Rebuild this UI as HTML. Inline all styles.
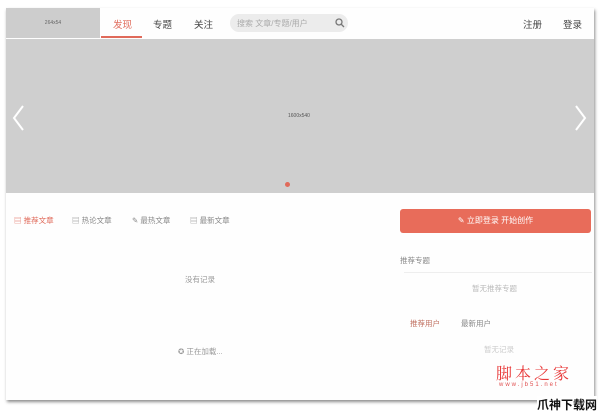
<!DOCTYPE html>
<html><head><meta charset="utf-8"><style>
body{margin:0;width:600px;height:409px;background:#fff;position:relative;overflow:hidden;font-family:"Liberation Sans","Noto Sans CJK SC",sans-serif;}
.card{position:absolute;left:6px;top:8px;width:588px;height:392px;background:#fefefe;box-shadow:1px 2px 3px rgba(0,0,0,.45);}
.a{position:absolute;white-space:nowrap;}
</style></head><body>
<div class="card">
 <div class="a" style="left:0;top:0;width:94px;height:30px;background:#cdcdcd;color:#666;font-size:5px;line-height:30px;text-align:center">264x54</div>
 <div class="a" style="left:107px;top:9px;font-size:9.5px;color:#e06a5a">发现</div>
 <div class="a" style="left:95px;top:28px;width:41px;height:2px;background:#e06a5a"></div>
 <div class="a" style="left:147px;top:9px;font-size:9.5px;color:#444">专题</div>
 <div class="a" style="left:188px;top:9px;font-size:9.5px;color:#444">关注</div>
 <div class="a" style="left:224px;top:6px;width:118px;height:18px;border-radius:9px;background:#ececec"></div>
 <div class="a" style="left:231px;top:10px;font-size:8px;color:#aaa">搜索 文章/专题/用户</div>
 <svg class="a" style="left:329px;top:10px" width="10" height="10"><circle cx="4" cy="4" r="3" fill="none" stroke="#777" stroke-width="1.3"/><path d="M6 6L9 9" stroke="#777" stroke-width="1.3"/></svg>
 <div class="a" style="left:517px;top:9px;font-size:9.5px;color:#444">注册</div>
 <div class="a" style="left:557px;top:9px;font-size:9.5px;color:#444">登录</div>
 <div class="a" style="left:0;top:31px;width:588px;height:154px;background:#cfcfcf"></div>
 <div class="a" style="left:282px;top:105px;font-size:5px;color:#555">1600x540</div>
 <svg class="a" style="left:5px;top:96px" width="16" height="28"><path d="M12 2L3 14L12 26" fill="none" stroke="#fff" stroke-width="2"/></svg>
 <svg class="a" style="left:566px;top:96px" width="16" height="28"><path d="M4 2L13 14L4 26" fill="none" stroke="#fff" stroke-width="2"/></svg>
 <div class="a" style="left:279px;top:174px;width:5px;height:5px;border-radius:50%;background:#e06a5a"></div>
 <div class="a" style="left:8px;top:207px;font-size:7.5px;color:#e06a5a">▤ 推荐文章</div>
 <div class="a" style="left:66px;top:207px;font-size:7.5px;color:#888">▤ 热论文章</div>
 <div class="a" style="left:126px;top:207px;font-size:7.5px;color:#888">✎ 最热文章</div>
 <div class="a" style="left:184px;top:207px;font-size:7.5px;color:#888">▤ 最新文章</div>
 <div class="a" style="left:394px;top:201px;width:191px;height:24px;border-radius:3px;background:#e86c5a;color:#fff;font-size:8px;line-height:24px;text-align:center">✎ 立即登录 开始创作</div>
 <div class="a" style="left:394px;top:247px;font-size:7.5px;color:#888">推荐专题</div>
 <div class="a" style="left:398px;top:264px;width:188px;height:1px;background:#eee"></div>
 <div class="a" style="left:466px;top:275px;font-size:7.5px;color:#bbb">暂无推荐专题</div>
 <div class="a" style="left:179px;top:266px;font-size:7.5px;color:#999">没有记录</div>
 <div class="a" style="left:404px;top:310px;font-size:7.5px;color:#c07060">推荐用户</div>
 <div class="a" style="left:455px;top:310px;font-size:7.5px;color:#888">最新用户</div>
 <div class="a" style="left:172px;top:338px;font-size:7.5px;color:#999">✪ 正在加载...</div>
 <div class="a" style="left:478px;top:336px;font-size:7.5px;color:#ccc">暂无记录</div>
 <div class="a" style="left:490px;top:353px;font-size:16px;color:#e83838;letter-spacing:3px;font-family:'Noto Serif CJK SC',serif">脚本之家</div>
 <div class="a" style="left:493px;top:374px;font-size:6px;color:#e05050;letter-spacing:2px">www.jb51.net</div>
</div>
<div class="a" style="left:537px;top:396px;font-size:12px;font-weight:bold;color:#111;background:#fff">爪神下载网</div>
</body></html>
